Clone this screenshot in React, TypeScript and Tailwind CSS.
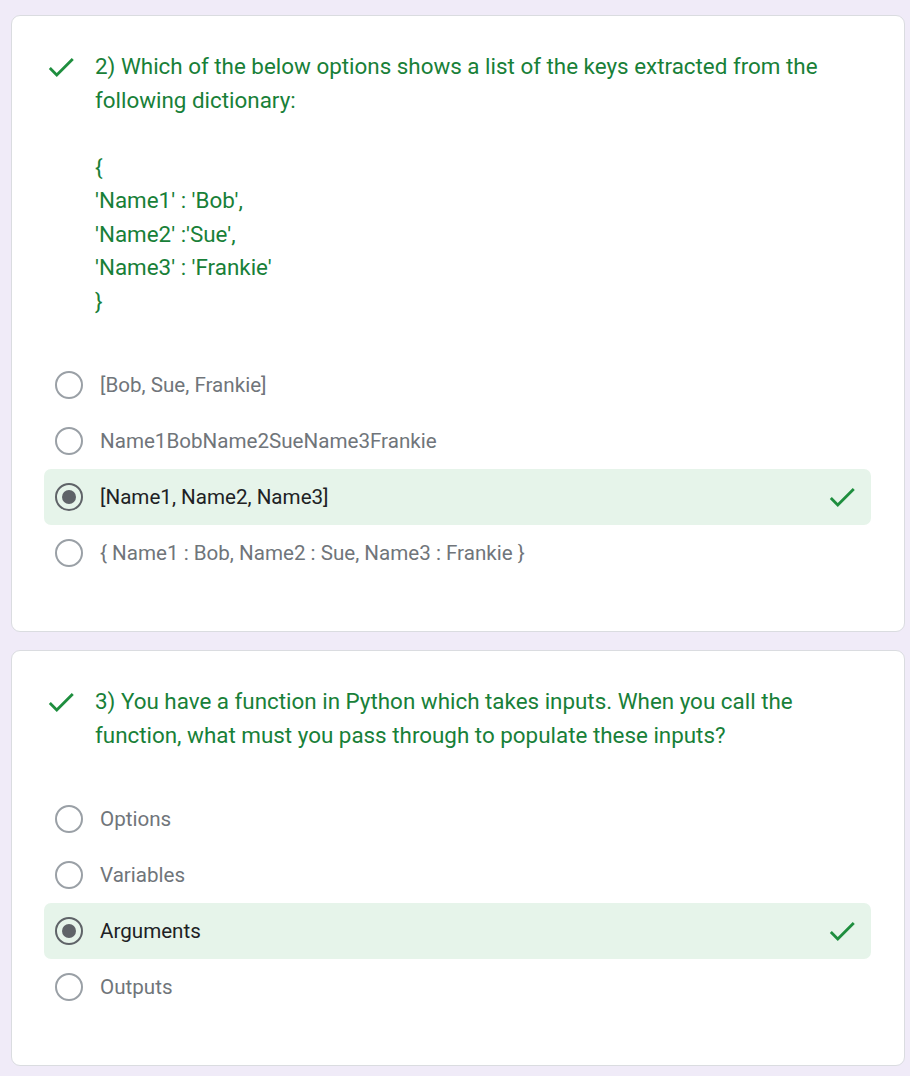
const CHECK = "M9 16.17L4.83 12l-1.42 1.41L9 19 21 7l-1.41-1.41z";

function Check() {
  return (
    <svg width="34" height="34" viewBox="0 0 24 24" className="shrink-0">
      <path d={CHECK} fill="#1e8e3e" />
    </svg>
  );
}

type Option = { label: string; selected?: boolean };

function Radio({ selected }: { selected?: boolean }) {
  return selected ? (
    <div className="size-[28px] rounded-full border-[2.5px] border-[#5f6368] flex items-center justify-center shrink-0">
      <div className="size-[14px] rounded-full bg-[#5f6368]" />
    </div>
  ) : (
    <div className="size-[28px] rounded-full border-[2.5px] border-[#9aa0a6] shrink-0" />
  );
}

function Question({ lines, options }: { lines: string[]; options: Option[] }) {
  return (
    <div className="bg-white rounded-[9px] border border-[#dadce0] pt-[34px] pl-[32px] pr-[33px]">
      <div className="flex gap-[17px]">
        <div className="h-[33px] flex items-center">
          <Check />
        </div>
        <div className="text-[22.4px] leading-[33.5px] text-[#188038]">
          {lines.map((l, i) => (
            <div key={i} className="min-h-[33.5px]">{l}</div>
          ))}
        </div>
      </div>
      <div className="mt-[39px] mb-[50px]">
        {options.map((o) => (
          <div
            key={o.label}
            className={`h-[56px] pl-[11px] pr-[12px] rounded-[7px] flex items-center ${o.selected ? "bg-[#e6f4ea]" : ""}`}
          >
            <Radio selected={o.selected} />
            <span className={`ml-[17px] text-[20.6px] flex-1 ${o.selected ? "text-[#202124]" : "text-[#70757a]"}`}>{o.label}</span>
            {o.selected && <Check />}
          </div>
        ))}
      </div>
    </div>
  );
}

export default function App() {
  return (
    <div className="min-h-screen bg-[#f0ebf8] pt-[15px] pl-[11px] pb-[10px]" style={{ fontFamily: "Roboto, 'Liberation Sans', sans-serif" }}>
      <div className="w-[894px] flex flex-col gap-[18px]">
        <Question
          lines={[
            "2) Which of the below options shows a list of the keys extracted from the",
            "following dictionary:",
            "",
            "{",
            "'Name1' : 'Bob',",
            "'Name2' :'Sue',",
            "'Name3' : 'Frankie'",
            "}",
          ]}
          options={[
            { label: "[Bob, Sue, Frankie]" },
            { label: "Name1BobName2SueName3Frankie" },
            { label: "[Name1, Name2, Name3]", selected: true },
            { label: "{ Name1 : Bob, Name2 : Sue, Name3 : Frankie }" },
          ]}
        />
        <Question
          lines={[
            "3) You have a function in Python which takes inputs. When you call the",
            "function, what must you pass through to populate these inputs?",
          ]}
          options={[
            { label: "Options" },
            { label: "Variables" },
            { label: "Arguments", selected: true },
            { label: "Outputs" },
          ]}
        />
      </div>
    </div>
  );
}
